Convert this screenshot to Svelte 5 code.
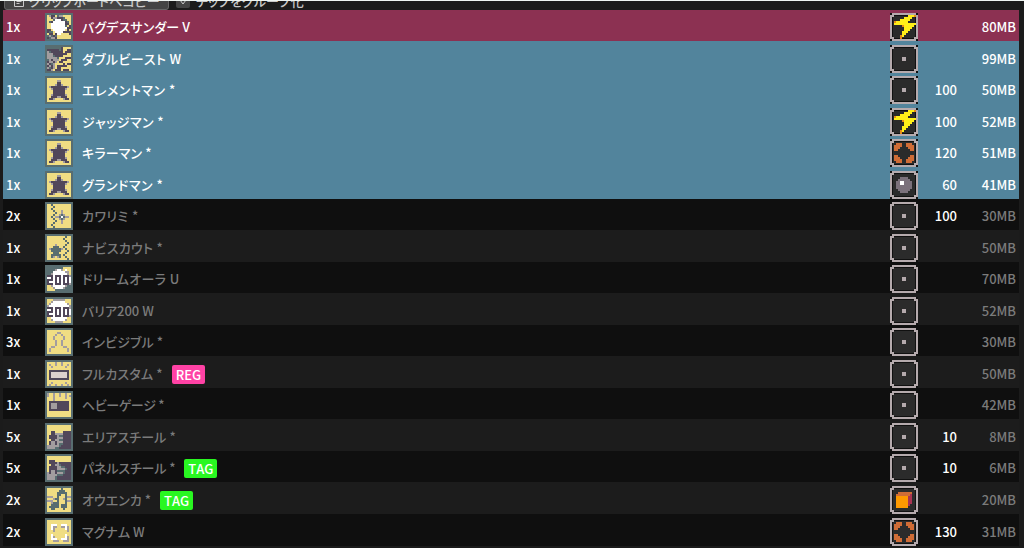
<script>
  // 12x12 pixel maps, one character per pixel; the frame is drawn separately.
  const art = {
    thunder: '.gdd.tgg..../..dggdddt.../...twwwdtt../.tdwwwwwwdt./..wwwwwwwdd./..wwwwwwwt.d/..wwwwwwwwdd/dd.wwwwww.d./dtt.wwwwdddd/.dd.dww....d/tgtdt......./dtggd.......',
    beast: 'tttttttd..../ddddddtd..dd/gtdddddd.ddd/gggddddddd../gggtdddd..../gggggt...ddd/tgdggg.ddd../dggdg.dd..../gdtg....d.dd/dgdg.ddddd../gtdg.dd...../ddg.ddd.ddd.',
    star: '............/.....gg...../.....dd...../....gddg..../.gddddddddg./..gddddddg../...dddddd.../...dddddd.../..gddddddg../..dddggddd../.ddg....gdd./............',
    substitute: '..t........./...t......../..t........./...t...g..../....t..g..../...t..gtg.../..t.ggtwtgg./...t..gtg.../....t..g..../...t...g..../..t........./...t........',
    scout: '.........t../........t.../.........t../..........t./....g....t../...ttt..t.../.gtttttg.t../..ttttt...t./...ttt...t../..ttttt.t.../..tg.gt..t../..........t.',
    aura: 'tttttttt..../ttttgwwg.w../tttwwwwwwgg./ttgwwwwwwwg./dddwdddwdddg/wwdwdwdwdwdw/dddwdwdwdwdw/dwwwdwdwdwdw/dddwdddwdddg/..gwwwwwwgtt/...gwwwwgttt/....tttttttt',
    barrier: '...gggggg.../..gwwwwww.../.gwwwwwwwwg./gwwwwwwwwwwg/dddwdddwdddg/wwdwdwdwdwdw/dddwdwdwdwdw/dwwwdwdwdwdw/dddwdddwdddg/..wwwwwwww../..gwwwwwwg../....gggg....',
    invisible: '............/.....gg...../....g..g..../...g....g.../...g....g.../....g..g..../....g..g..../....g..g..../..gg....gg../.g........g./.g........g./............',
    custom: '....g..g..../.g..g..g..g./..g......g../............/.dddddddddd./.dppppppppd./.dppppppppd./.dppppppppd./.dddddddddd./............/..g......g../.g..g..g..g.',
    gauge: 'g..g..g..g../g..g..g..g.g/...g.....g../...g......../.dddddddddd./.dgggdddddd./.dgggdddddd./.dgggdddddd./.dddddddddd./............/............/............',
    area: '............/............/............/..dd....dddd/..ddggggdddd/.ddddgttdddd/.ddddgggdddd/..ddggttdddd/.dggdgggdddd/.dggdgttdddd/ggggggtddddd/ggggttdddddd',
    panel: '............/............/.ddd......../.ddddgdddddd/..ddggtddddd/.ddddggttddd/.ddddggggtdd/.dggdttttddd/gdggdgggtddd/gggggtttdddd/ggggtddddddd/ggggtddddddd',
    music: '.......t..../......ttt.../.....ttttt../.....tt..t../ggg..t...tgg/...gtt..gt../ggg..t...tgg/..gttt...t../..tttt.ttt../.ttttt.ttt../..tt....t.../............',
    magnum: '............/............/..www..www../..wgg..ggwg./..wg.....wg./...g......g./............/..w......w../..wg.....wg./..www..wwwg./...ggg..ggg./............',
  };

  const elements = {
    none: '............/............/............/............/............/.....nn...../.....nn...../............/............/............/............/............',
    elec: '........eeeo/......eeee../....eeeee.../.oeeeeee..../.eeeeeeeeeee/.....oeeeee./......eeee../......eee.../.....eee..../.....ee...../....oe....../....o.......',
    cursor: '............/..ccc..ccc../.cccc..cccc./.ccc....ccc./.cc......cc./............/............/.cc......cc./.ccc....ccc./.cccc..cccc./..ccc..ccc../............',
    breaker: '............/............/....ssss..../...ssssss.../..sswwssss../..sswwssss../..ssssssss../..ssssssss../...ssssss.../....ssss..../............/............',
    object: '............/............/...ccccccc../..cccccccm../..bbbbbbmm../..bbbbbbmm../..bbbbbbmm../..bbbbbbmm../..bbbbbbm.../..bbbbbb..../............/............',
  };

  const colors = {
    d: '#51475a', g: '#a39d9f', t: '#586d70', w: '#ffffff', p: '#ded1ce', n: '#b5aaad',
    e: '#ffef18', o: '#e58a18', c: '#d06c36', s: '#7b717b', b: '#ff9900', m: '#a93452',
  };

  // track is the letter spacing of the name, in px
  const chips = [
    { count: 1, icon: 'thunder', name: 'バグデスサンダー V', track: 0.1, element: 'elec', mb: 80, kind: 'giga' },
    { count: 1, icon: 'beast', name: 'ダブルビースト W', track: 0.35, element: 'none', mb: 99, kind: 'mega' },
    { count: 1, icon: 'star', name: 'エレメントマン *', track: 0.5, element: 'none', power: 100, mb: 50, kind: 'mega' },
    { count: 1, icon: 'star', name: 'ジャッジマン *', track: 0.4, element: 'elec', power: 100, mb: 52, kind: 'mega' },
    { count: 1, icon: 'star', name: 'キラーマン *', track: 0.15, element: 'cursor', power: 120, mb: 51, kind: 'mega' },
    { count: 1, icon: 'star', name: 'グランドマン *', track: 0.5, element: 'breaker', power: 60, mb: 41, kind: 'mega' },
    { count: 2, icon: 'substitute', name: 'カワリミ *', track: 0.4, element: 'none', power: 100, mb: 30 },
    { count: 1, icon: 'scout', name: 'ナビスカウト *', track: 0.25, element: 'none', mb: 50 },
    { count: 1, icon: 'aura', name: 'ドリームオーラ U', track: 0.35, element: 'none', mb: 70 },
    { count: 1, icon: 'barrier', name: 'バリア200 W', track: 0, element: 'none', mb: 52 },
    { count: 3, icon: 'invisible', name: 'インビジブル *', track: 0.1, element: 'none', mb: 30 },
    { count: 1, icon: 'custom', name: 'フルカスタム *', track: 0.15, element: 'none', mb: 50, badge: 'REG' },
    { count: 1, icon: 'gauge', name: 'ヘビーゲージ *', track: -0.4, element: 'none', mb: 42 },
    { count: 5, icon: 'area', name: 'エリアスチール *', track: 0.1, element: 'none', power: 10, mb: 8 },
    { count: 5, icon: 'panel', name: 'パネルスチール *', track: -0.15, element: 'none', power: 10, mb: 6, badge: 'TAG' },
    { count: 2, icon: 'music', name: 'オウエンカ *', track: 0, element: 'object', mb: 20, badge: 'TAG' },
    { count: 2, icon: 'magnum', name: 'マグナム W', track: 0, element: 'cursor', power: 130, mb: 31 },
  ];

  function pixels(map) {
    return map.split('/').flatMap((row, y) =>
      [...row].map((c, x) => ({ x: x + 1, y: y + 1, fill: colors[c] })).filter((p) => p.fill),
    );
  }
</script>

<div class="folder">
  <div class="toolbar">
    <button class="copy">
      <svg width="12" height="14" viewBox="0 0 12 14" fill="none" stroke="currentColor">
        <path d="M1.5 1.5h9v11h-9zM3.5 5.5h5M3.5 7.5h5M3.5 9.5h3" />
      </svg>
      クリップボードへコピー
    </button>
    <label class="group">
      <span class="box">
        <svg width="8" height="8" viewBox="0 0 8 8" fill="none" stroke="currentColor"><path d="M1 3l3 4 3-4" /></svg>
      </span>
      チップをグループ化
    </label>
  </div>

  <div class="list">
    {#each chips as chip}
      <div class="row {chip.kind ?? ''}">
        <span class="count">{chip.count}x</span>
        <svg class="icon" viewBox="0 0 14 14" shape-rendering="crispEdges">
          <path fill="#586d70" d="M0 0h14v14H0z" />
          <path fill="#f0dd83" d="M1 1h12v12H1z" />
          {#each pixels(art[chip.icon]) as p}
            <rect x={p.x} y={p.y} width="1" height="1" fill={p.fill} />
          {/each}
        </svg>
        <span class="name" style="letter-spacing: {chip.track}px">{chip.name}</span>
        {#if chip.badge}
          <span class="badge {chip.badge.toLowerCase()}">{chip.badge}</span>
        {/if}
        <svg class="icon element" viewBox="0 0 28 28" shape-rendering="crispEdges">
          <path fill="#101010" d="M0 0h28v28H0z" />
          <path fill="#b5aaad" d="M2 0h24v2h2v24h-2v2H2v-2H0V2h2z" />
          <path fill="#101010" d="M4 2h20v2h2v20h-2v2H4v-2H2V4h2z" />
          <path fill="#2b2b2b" d="M4 3h20v1h1v20h-1v1H4v-1H3V4h1z" />
          <g transform="scale(2)">
            {#each pixels(elements[chip.element]) as p}
              <rect x={p.x} y={p.y} width="1" height="1" fill={p.fill} />
            {/each}
          </g>
        </svg>
        <span class="power">{chip.power ?? ''}</span>
        <span class="mb">{chip.mb}MB</span>
      </div>
    {/each}
  </div>
</div>

<style>
  :global(body) {
    background: #1b1b1b;
    overflow: hidden;
  }
  .folder {
    height: 548px;
    box-sizing: border-box;
    border-top: 1px solid #eff5f2;
    overflow: hidden;
    background: #1b1b1b;
    color: #fff;
    font: 500 13px/20px 'Noto Sans CJK JP', sans-serif;
    font-feature-settings: 'palt';
    font-kerning: none;
  }
  .toolbar {
    height: 9px;
    display: flex;
    align-items: flex-end;
    gap: 7px;
    padding-left: 4px;
    overflow: hidden;
    color: #c8c8c8;
  }
  .copy,
  .group {
    display: flex;
    align-items: center;
    height: 19px;
    box-sizing: border-box;
    font: inherit;
    font-feature-settings: inherit;
    color: inherit;
    white-space: nowrap;
  }
  .copy {
    width: 165px;
    justify-content: flex-start;
    gap: 4px;
    padding: 0 8px;
    background: #444;
    border: 1px solid #666;
    border-radius: 3px;
  }
  .group {
    gap: 6px;
  }
  .box {
    width: 14px;
    height: 14px;
    display: grid;
    place-items: center;
    background: #444;
    border-radius: 2px;
  }
  .list {
    margin: 0 5px 0 3px;
  }
  .row {
    height: 31px;
    box-sizing: border-box;
    padding-top: 3px;
    display: flex;
    align-items: center;
    background: #0f0f0f;
    white-space: nowrap;
  }
  .row:nth-child(even) {
    background: #1c1c1c;
  }
  .row:nth-child(even),
  .row:last-child {
    height: 32px;
    padding-top: 4px;
  }
  .row.giga {
    background: #8c3152;
  }
  .row.mega {
    background: #52849c;
  }
  .count {
    width: 39px;
    padding-left: 3px;
  }
  .icon {
    flex: none;
    width: 28px;
    height: 28px;
  }
  .name {
    margin-left: 9px;
    color: #7b7b7b;
  }
  .giga .name,
  .mega .name,
  .giga .mb,
  .mega .mb {
    color: #fff;
  }
  .badge {
    margin-left: 9px;
    padding: 0 4px;
    height: 19px;
    line-height: 19px;
    border-radius: 2px;
  }
  .reg {
    background: #ff42a5;
  }
  .tag {
    background: #29f721;
  }
  .element {
    margin-left: auto;
  }
  .power {
    width: 39px;
    text-align: right;
  }
  .mb {
    flex: none;
    width: 62px;
    padding-right: 3px;
    box-sizing: border-box;
    text-align: right;
    color: #7b7b7b;
  }
</style>
